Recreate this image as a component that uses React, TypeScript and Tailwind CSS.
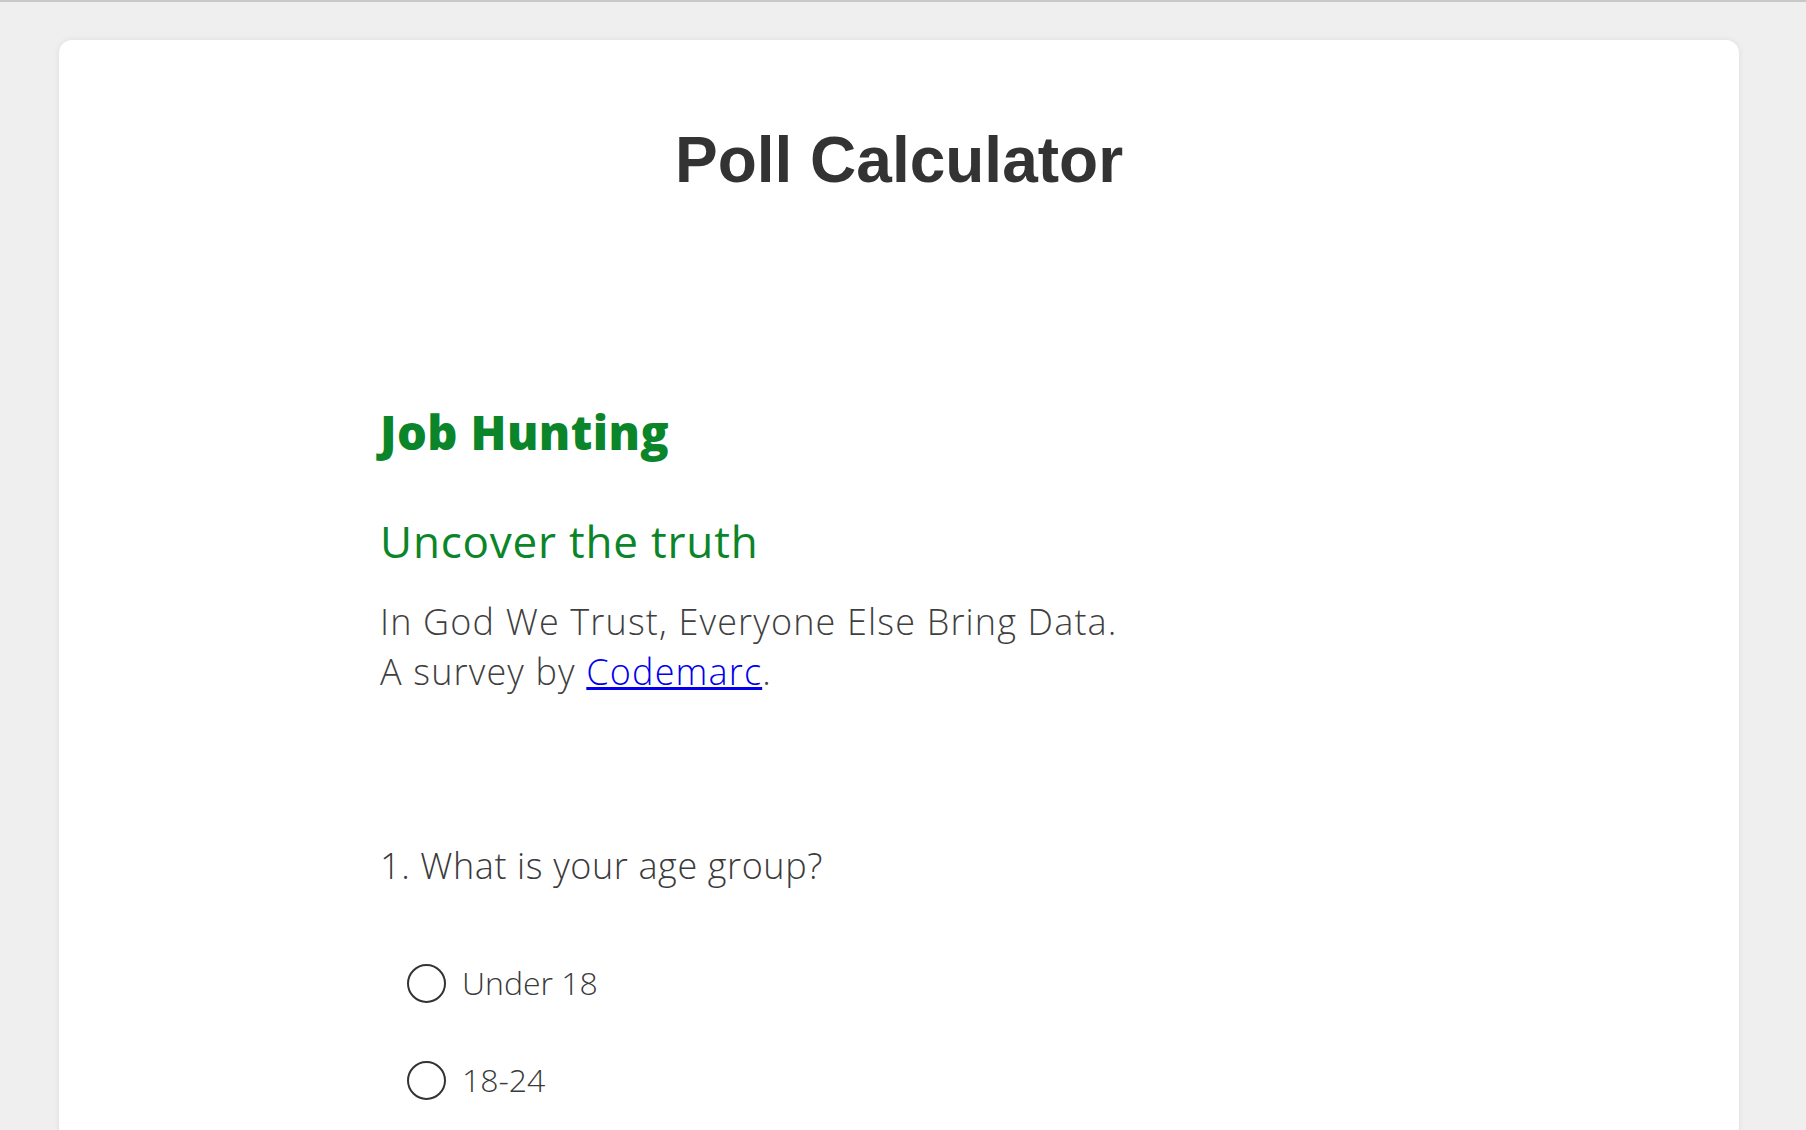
const OPTIONS = ['Under 18', '18-24'];

function Radio({ label }: { label: string }) {
  return (
    <label className="flex items-center h-[40px] cursor-pointer">
      <span className="w-[39px] h-[39px] rounded-full border-2 border-[#333333] bg-white shrink-0"></span>
      <span className="ml-[16px] text-[32px] leading-[40px] font-light text-[#3a3a3a]">{label}</span>
    </label>
  );
}

export default function App() {
  return (
    <div className="min-h-[1130px] bg-[#efefef] border-t-2 border-[#c8c8c8] font-['Open_Sans',sans-serif]">
      <div className="pt-[38px] pl-[59px]">
        <div className="w-[1680px] h-[1100px] bg-white rounded-[13px] shadow-[0_0_6px_rgba(0,0,0,0.08)] pt-[88px]">
          <h1 className="text-center text-[64px] leading-[64px] font-bold text-[#333333] font-['Liberation_Sans',Arial,sans-serif]">
            Poll Calculator
          </h1>

          <div className="pl-[321px]">
            <h2 className="mt-[217px] text-[47px] leading-[47px] font-extrabold tracking-[0.4px] text-[#0b8529]">Job Hunting</h2>
            <h3 className="mt-[63px] text-[44px] leading-[44px] font-normal tracking-[0.8px] text-[#0b8529]">Uncover the truth</h3>
            <p className="mt-[34px] text-[36px] leading-[50px] font-light tracking-[1.15px] text-[#3f3f3f]">
              In God We Trust, Everyone Else Bring Data.
              <br />
              A survey by <a href="#" className="text-[#0000ee] underline">Codemarc</a>.
            </p>

            <div className="mt-[145px]">
              <p className="text-[36px] leading-[48px] font-light tracking-[0.6px] text-[#3a3a3a]">1. What is your age group?</p>
              <div className="mt-[73px] pl-[27px] flex flex-col gap-[57px]">
                {OPTIONS.map(o => (
                  <Radio key={o} label={o} />
                ))}
              </div>
            </div>
          </div>
        </div>
      </div>
    </div>
  );
}
